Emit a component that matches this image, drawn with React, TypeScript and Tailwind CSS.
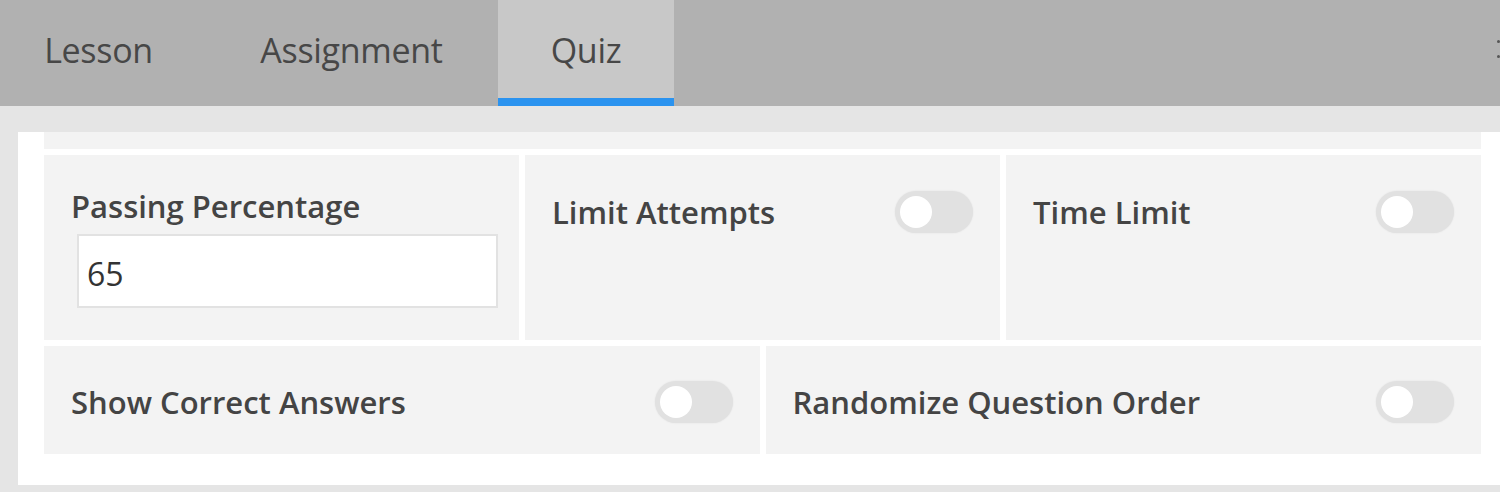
import React from 'react'

const font = "font-['Open_Sans','Noto_Sans',sans-serif]"

function Toggle() {
  return (
    <div className="w-[78px] h-[42px] shrink-0 rounded-full bg-[#e1e1e1] shadow-[0_0_2px_rgba(0,0,0,0.08)] flex items-center">
      <div className="w-[32px] h-[32px] ml-[5px] rounded-full bg-white" />
    </div>
  )
}

function ToggleCard({ label }: { label: string }) {
  return (
    <div className="h-[185px] bg-[#f3f3f3] px-[27px] pt-[36px]">
      <div className="flex items-center justify-between">
        <span className="text-[31px] leading-[42px] font-[550] text-[#444]">{label}</span>
        <Toggle />
      </div>
    </div>
  )
}

function WideToggleCard({ label }: { label: string }) {
  return (
    <div className="h-[108px] bg-[#f3f3f3] px-[27px] pt-[4px] flex items-center justify-between">
      <span className="text-[31px] leading-[42px] font-[550] text-[#444]">{label}</span>
      <Toggle />
    </div>
  )
}

const tabs = [
  { name: 'Lesson', w: 'w-[213px]', active: false },
  { name: 'Assignment', w: 'w-[293px]', active: false },
  { name: 'Quiz', w: 'w-[176px]', active: true },
]

export default function App() {
  return (
    <div className={`w-[1500px] h-[492px] overflow-hidden bg-[#e5e5e5] ${font}`}>
      <div className="h-[106px] bg-[#b1b1b1] flex">
        <div className="flex -ml-[8px]">
          {tabs.map((t) => (
            <div
              key={t.name}
              className={`${t.w} h-full flex flex-col ${t.active ? 'bg-[#c8c8c8]' : ''}`}
            >
              <div className="flex-1 flex items-center justify-center pt-[2px]">
                <span className="text-[34px] font-normal tracking-[-0.3px] text-[#474747]">{t.name}</span>
              </div>
              <div className={`h-[8px] ${t.active ? 'bg-[#2b93ef]' : ''}`} />
            </div>
          ))}
        </div>
        <div className="ml-auto w-[3px] flex flex-col gap-[12px] pt-[40px]">
          <div className="w-[3px] h-[3px] rounded-full bg-[#555]" />
          <div className="w-[3px] h-[3px] rounded-full bg-[#555]" />
        </div>
      </div>

      <div className="pl-[18px] pt-[26px]">
        <div className="bg-white pl-[26px] pr-[19px] pb-[31px] flex flex-col gap-[6px]">
          <div className="h-[17px] bg-[#f3f3f3]" />

          <div className="grid grid-cols-3 gap-[6px]">
            <div className="h-[185px] bg-[#f3f3f3] pl-[27px] pr-[21px] pt-[32px]">
              <div className="text-[31px] leading-[38px] font-[550] text-[#444]">Passing Percentage</div>
              <input
                type="text"
                defaultValue="65"
                className="mt-[9px] ml-[6px] w-[421px] h-[74px] bg-white border-2 border-[#e2e2e2] pl-[8px] pt-[4px] text-[32px] text-[#333] outline-none"
              />
            </div>
            <ToggleCard label="Limit Attempts" />
            <ToggleCard label="Time Limit" />
          </div>

          <div className="grid grid-cols-2 gap-[6px]">
            <WideToggleCard label="Show Correct Answers" />
            <WideToggleCard label="Randomize Question Order" />
          </div>
        </div>
      </div>
    </div>
  )
}
